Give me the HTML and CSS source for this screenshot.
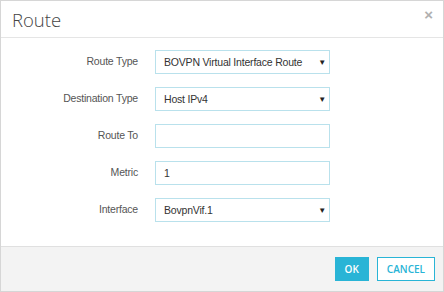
FILE: index.html
```html
<!DOCTYPE html>
<html>
	<head>
		<title>Route</title>
		<link rel="stylesheet" href="styles.css">
	</head>
	<body>
		<div class='dialog'>
			<div class='head'>
				<h1>Route</h1>
				<span class='close'>&times;</span>
			</div>
			<div class='form'>
				<label>Route Type</label>
				<div class='field select'>BOVPN Virtual Interface Route<span class='caret'>&#9660;</span></div>
				<label>Destination Type</label>
				<div class='field select'>Host IPv4<span class='caret'>&#9660;</span></div>
				<label>Route To</label>
				<div class='field'></div>
				<label>Metric</label>
				<div class='field'>1</div>
				<label>Interface</label>
				<div class='field select'>BovpnVif.1<span class='caret'>&#9660;</span></div>
			</div>
			<div class='foot'>
				<button class='ok'>OK</button>
				<button class='cancel'>CANCEL</button>
			</div>
		</div>
	</body>
</html>
```
FILE: styles.css
```css
body{
	margin:0;
	font-family:"Liberation Sans", Arial, sans-serif;
}
.dialog{
	width:444px;
	height:292px;
	box-sizing:border-box;
	border:1px solid #d6d6d6;
	display:flex;
	flex-direction:column;
	background:#fff;
}
.head{
	height:36px;
	border-bottom:1px solid #e5e5e5;
	display:flex;
	align-items:center;
	justify-content:space-between;
	padding:0 10px 0 11px;
}
h1{
	margin:0;
	font-family:"Open Sans", sans-serif;
	font-weight:300;
	font-size:18.5px;
	color:#444;
}
.close{
	color:#b0b0b0;
	font-size:15px;
	font-weight:bold;
	margin-top:-9px;
}
.form{
	flex:1;
	display:grid;
	grid-template-columns:137px 175px;
	grid-auto-rows:24px;
	column-gap:17px;
	row-gap:13px;
	padding-top:12px;
	align-content:start;
}
label{
	text-align:right;
	font-size:10.5px;
	letter-spacing:-0.2px;
	color:#555;
	line-height:22px;
}
.field{
	border:1px solid #b9e1ec;
	font-size:10.5px;
	letter-spacing:-0.2px;
	color:#333;
	line-height:23px;
	padding:0 8px;
	position:relative;
}
.caret{
	position:absolute;
	right:3px;
	top:0;
	font-size:8px;
	color:#222;
}
.foot{
	height:44px;
	background:#f3f3f3;
	border-top:1px solid #e0e0e0;
	display:flex;
	justify-content:flex-end;
	align-items:center;
	gap:8px;
	padding-right:8px;
}
button{
	height:24px;
	font-family:"Open Sans", sans-serif;
	font-size:10px;
	font-weight:600;
	border:1px solid #29b4d6;
	padding:0 9px;
}
.ok{
	background:#29b4d6;
	color:#fff;
}
.cancel{
	background:#fff;
	color:#29b4d6;
}
```
